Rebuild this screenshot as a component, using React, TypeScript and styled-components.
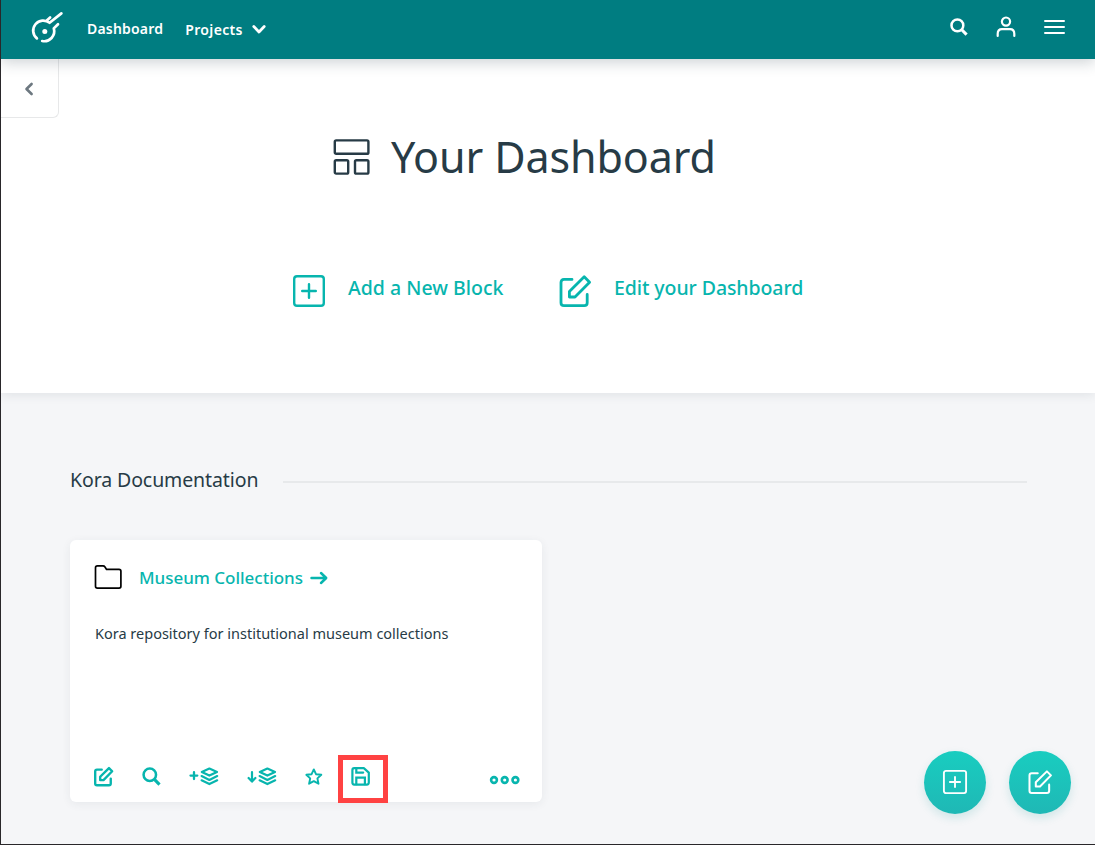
import React from 'react';
import styled, { createGlobalStyle } from 'styled-components';

const teal = '#07b5ae';
const ink = '#273b46';

const GlobalStyle = createGlobalStyle`
  *, *::before, *::after { box-sizing: border-box; }
  body {
    margin: 0;
    font-family: 'Noto Sans', 'Open Sans', sans-serif;
    color: ${ink};
    background: #fff;
  }
  a { text-decoration: none; color: inherit; }
  svg { display: block; flex: none; overflow: visible; }
  button { border: 0; padding: 0; background: none; color: inherit; font: inherit; }
`;

const Page = styled.div`
  position: relative;
  display: flex;
  flex-direction: column;
  width: 1095px;
  height: 845px;
  overflow: hidden;
  border-left: 1px solid #29272a;
  border-bottom: 1px solid #29272a;
  background: #f5f6f8;
`;

const Header = styled.header`
  position: relative;
  z-index: 2;
  display: flex;
  align-items: center;
  flex: none;
  height: 59px;
  padding: 0 29px 3px 29px;
  background: #007d81;
  color: #fff;
  box-shadow: 0 3px 14px rgba(39, 59, 70, 0.24);
`;

const Brand = styled.a`
  margin-top: -4px;
`;

const NavLink = styled.a<{ $left: number; $drop?: number; $spacing: number }>`
  display: flex;
  align-items: center;
  gap: 9px;
  margin: ${(p) => p.$drop ?? 0}px 0 0 ${(p) => p.$left}px;
  font-size: 14px;
  line-height: 20px;
  font-weight: 600;
  letter-spacing: ${(p) => p.$spacing}px;
  white-space: nowrap;
`;

const HeaderTools = styled.div`
  display: flex;
  align-items: center;
  gap: 28px;
  height: 24px;
  margin: -3px 0 0 auto;
`;

const Hero = styled.section`
  position: relative;
  z-index: 1;
  flex: none;
  height: 334px;
  background: #fff;
  box-shadow: 0 2px 10px rgba(39, 59, 70, 0.1);
`;

const BackButton = styled.button`
  display: flex;
  align-items: center;
  justify-content: center;
  width: 58px;
  height: 59px;
  padding: 2px 1px 0 0;
  border: solid #e7e8e9;
  border-width: 0 1px 1px 0;
  border-bottom-right-radius: 6px;
  color: #6d7880;
`;

const TitleRow = styled.div`
  display: flex;
  align-items: center;
  height: 78px;
  padding-left: 332px;
`;

const Title = styled.h1`
  margin: 0 0 0 21px;
  font-size: 43px;
  line-height: 60px;
  font-weight: 400;
  letter-spacing: -0.1px;
  white-space: nowrap;
`;

const Actions = styled.div`
  display: flex;
  align-items: center;
  height: 40px;
  margin: 74px 0 0 292px;
`;

const Action = styled.a<{ $width: number; $spacing?: number }>`
  display: flex;
  align-items: center;
  gap: 23px;
  width: ${(p) => p.$width}px;
  color: ${teal};
  font-size: 19.5px;
  font-weight: 500;
  line-height: 28px;
  letter-spacing: ${(p) => p.$spacing ?? 0}px;
  white-space: nowrap;

  svg {
    margin-top: 1px;
  }
`;

const ActionText = styled.span`
  margin-top: -5px;
`;

const Content = styled.main`
  flex: 1;
  padding: 73px 68px 0 69px;
`;

const SectionHeading = styled.div`
  display: flex;
  align-items: center;
  height: 28px;
`;

const SectionTitle = styled.h2`
  width: 213px;
  margin: 0;
  font-size: 19.5px;
  line-height: 28px;
  font-weight: 400;
  letter-spacing: -0.1px;
  white-space: nowrap;
`;

const Rule = styled.div`
  flex: 1;
  height: 2px;
  margin-top: 3px;
  background: #e7e9eb;
`;

const Card = styled.article`
  display: flex;
  flex-direction: column;
  width: 472px;
  height: 262px;
  margin-top: 46px;
  padding: 24px 22px 0 24px;
  border-radius: 6px;
  background: #fff;
  box-shadow: 0 2px 10px rgba(39, 59, 70, 0.07);
`;

const CardHeader = styled.div`
  display: flex;
  align-items: center;
  height: 26px;
`;

const CardLink = styled.a`
  display: flex;
  align-items: center;
  gap: 7px;
  margin: 1px 0 0 17px;
  color: ${teal};
  font-size: 17px;
  line-height: 24px;
  font-weight: 500;
  letter-spacing: -0.02px;
  white-space: nowrap;
`;

const Description = styled.p`
  margin: 32px 0 0 1px;
  font-size: 14.5px;
  line-height: 22px;
  white-space: nowrap;
`;

const CardTools = styled.div`
  display: flex;
  align-items: center;
  height: 48px;
  margin-top: auto;
  padding-bottom: 3px;
  color: ${teal};
`;

const Tool = styled.button<{ $gap: number }>`
  margin-right: ${(p) => p.$gap}px;
`;

const SaveTool = styled(Tool)`
  position: relative;

  &::after {
    content: '';
    position: absolute;
    left: -13px;
    top: -12px;
    width: 50px;
    height: 48px;
    border: 5px solid #ff4242;
  }
`;

const MoreTool = styled.button`
  margin: 6px 0 0 auto;
`;

const FloatingActions = styled.div`
  position: absolute;
  z-index: 3;
  right: 24px;
  bottom: 30px;
  display: flex;
  gap: 23px;
`;

const Fab = styled.button`
  display: flex;
  align-items: center;
  justify-content: center;
  width: 62px;
  height: 63px;
  padding-bottom: 1px;
  border-radius: 50%;
  background: linear-gradient(#19cdc0, #1fb8b5);
  color: #fff;
  box-shadow: 0 4px 10px rgba(20, 150, 150, 0.16);
`;

type StrokeProps = { w: number; h: number; sw: number; box?: string; children: React.ReactNode };

const Stroke = ({ w, h, sw, box, children }: StrokeProps) => (
  <svg width={w} height={h} viewBox={box ?? `0 0 ${w} ${h}`} fill="none" stroke="currentColor"
    strokeWidth={sw} strokeLinecap="round" strokeLinejoin="round">
    {children}
  </svg>
);

const Logo = () => (
  <Stroke w={36} h={36} sw={2.7}>
    <path d="M6.9 30.4 A10 10 0 0 1 19.6 14.8 L31.4 5.4" />
    <path d="M16.8 12.4 L20.1 9.4" />
    <path d="M28 16.2 L23.8 20.4 A10 10 0 0 1 12.2 33" />
    <circle cx="14.8" cy="23.4" r="2.5" fill="currentColor" stroke="none" />
  </Stroke>
);

const PlusBoxIcon = ({ size, sw }: { size: number; sw: number }) => (
  <Stroke w={size} h={size} sw={sw} box="0 0 32 32">
    <rect x="1.2" y="1.2" width="29.6" height="29.6" rx="2.8" />
    <path d="M16 9.2V22.8M9.2 16H22.8" />
  </Stroke>
);

const EditIcon = ({ size, sw }: { size: number; sw: number }) => (
  <Stroke w={size} h={size} sw={sw} box="0 0 32 32">
    <path d="M13 4.4H5Q2 4.4 2 7.4V27.7Q2 30.7 5 30.7H25.2Q28.2 30.7 28.2 27.7V19.5" />
    <path d="M10.4 22V16.4L25.2 1.8L30.6 7.2L16 22Z" />
  </Stroke>
);

const SearchIcon = ({ size, sw }: { size: number; sw: number }) => (
  <Stroke w={size} h={size} sw={sw} box="0 0 18 18">
    <circle cx="7.4" cy="7.4" r="5.9" />
    <path d="M12 12L16.6 16.6" strokeLinecap="butt" strokeWidth={sw + 0.6} />
  </Stroke>
);

const Layers = ({ children, w, x }: { children: React.ReactNode; w: number; x: number }) => (
  <Stroke w={w} h={19} sw={2.2}>
    {children}
    <g transform={`translate(${x} 0)`}>
      <path d="M9 1.5L16.6 5L9 8.6L1.4 5Z" />
      <path d="M1.2 9.1L9 12.9L16.8 9.1M1.2 13.3L9 17.1L16.8 13.3" />
    </g>
  </Stroke>
);

export default function App() {
  return (
    <>
      <GlobalStyle />
      <Page>
        <Header>
          <Brand aria-label="Home"><Logo /></Brand>
          <NavLink $left={21} $drop={1} $spacing={0.2}>Dashboard</NavLink>
          <NavLink $left={22} $drop={3} $spacing={0.35}>
            Projects
            <Stroke w={14} h={9} sw={2.8}>
              <path d="M1.8 1.6L7 6.9L12.2 1.6" />
            </Stroke>
          </NavLink>
          <HeaderTools>
            <SearchIcon size={18} sw={2.5} />
            <Stroke w={20} h={22} sw={2.2}>
              <circle cx="10" cy="5.6" r="4.1" />
              <path d="M1.7 19.9V17.7Q1.7 13.1 6 13.1H14Q18.3 13.1 18.3 17.7V19.9" />
            </Stroke>
            <Stroke w={22} h={16} sw={2}>
              <path d="M1 2H20M1 8H20M1 14H20" />
            </Stroke>
          </HeaderTools>
        </Header>

        <Hero>
          <BackButton aria-label="Back">
            <Stroke w={10} h={14} sw={2.6}>
              <path d="M7.6 2L2.5 7L7.6 12" />
            </Stroke>
          </BackButton>
          <TitleRow>
            <Stroke w={37} h={37} sw={2.4}>
              <rect x="1.8" y="1.4" width="33.6" height="13.4" rx="1.4" />
              <rect x="1.8" y="21.2" width="13.4" height="13.4" rx="1.4" />
              <rect x="22" y="21.2" width="13.4" height="13.4" rx="1.4" />
            </Stroke>
            <Title>Your Dashboard</Title>
          </TitleRow>
          <Actions>
            <Action $width={266}>
              <PlusBoxIcon size={32} sw={2.4} />
              <ActionText>Add a New Block</ActionText>
            </Action>
            <Action $width={260} $spacing={-0.08}>
              <EditIcon size={32} sw={2.8} />
              <ActionText>Edit your Dashboard</ActionText>
            </Action>
          </Actions>
        </Hero>

        <Content>
          <SectionHeading>
            <SectionTitle>Kora Documentation</SectionTitle>
            <Rule />
          </SectionHeading>

          <Card>
            <CardHeader>
              <Stroke w={28} h={26} sw={1.7}>
                <path stroke="#000" d="M3.4 1.8H9Q10.3 1.8 10.8 2.8L12.6 5.4H25Q26.9 5.4 26.9 7.3V22.2Q26.9 24.1 25 24.1H3.4Q1.5 24.1 1.5 22.2V3.7Q1.5 1.8 3.4 1.8Z" />
              </Stroke>
              <CardLink>
                Museum Collections
                <Stroke w={18} h={14} sw={2.5}>
                  <path d="M1.5 7H16M11 2L16.2 7L11 12" />
                </Stroke>
              </CardLink>
            </CardHeader>
            <Description>Kora repository for institutional museum collections</Description>
            <CardTools>
              <Tool $gap={29} aria-label="Edit"><EditIcon size={19} sw={4} /></Tool>
              <Tool $gap={28} aria-label="Search"><SearchIcon size={19} sw={2.4} /></Tool>
              <Tool $gap={28} aria-label="Add layer">
                <Layers w={30} x={11.4}>
                  <path d="M5 5.2V12M1.5 8.6H8.3" strokeWidth={2.3} />
                </Layers>
              </Tool>
              <Tool $gap={28} aria-label="Import layer">
                <Layers w={30} x={11.4}>
                  <path d="M5 5.2V14.2M1.6 11L5 14.6L8.4 11" strokeWidth={2.2} />
                </Layers>
              </Tool>
              <Tool $gap={28} aria-label="Favourite">
                <Stroke w={18} h={18} sw={1.9}>
                  <path d="M8.8 1.4L11 6.2L16.3 6.8L12.4 10.4L13.5 15.7L8.8 13.1L4.1 15.7L5.2 10.4L1.3 6.8L6.6 6.2Z" />
                </Stroke>
              </Tool>
              <SaveTool $gap={0} aria-label="Save">
                <Stroke w={19} h={19} sw={2.2}>
                  <path d="M3.2 1.2H12.8L17.8 5.6V15.6Q17.8 17.6 15.8 17.6H3.2Q1.4 17.6 1.4 15.6V3.2Q1.4 1.2 3.2 1.2Z" />
                  <path d="M5.3 1.8V5.6H12.2M5.3 17.2V10.6H13.9V17.2" strokeLinejoin="miter" />
                </Stroke>
              </SaveTool>
              <MoreTool aria-label="More">
                <Stroke w={31} h={10} sw={2.6}>
                  <circle cx="5" cy="5" r="2.9" />
                  <circle cx="15.7" cy="5" r="2.9" />
                  <circle cx="26.4" cy="5" r="2.9" />
                </Stroke>
              </MoreTool>
            </CardTools>
          </Card>
        </Content>

        <FloatingActions>
          <Fab aria-label="Add block"><PlusBoxIcon size={24} sw={2.5} /></Fab>
          <Fab aria-label="Edit dashboard"><EditIcon size={24} sw={2.7} /></Fab>
        </FloatingActions>
      </Page>
    </>
  );
}
